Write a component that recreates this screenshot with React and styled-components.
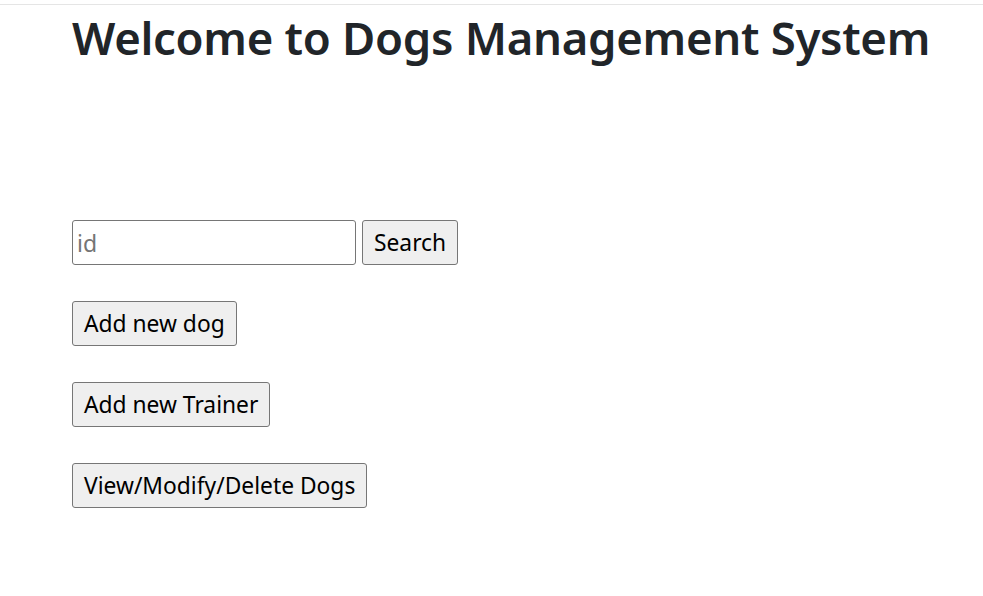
import React from "react";
import styled, { createGlobalStyle } from "styled-components";

const GlobalStyle = createGlobalStyle`
  html, body {
    margin: 0;
    padding: 0;
    background: #ffffff;
  }
  body {
    font-family: "Noto Sans", "Open Sans", sans-serif;
    color: #212529;
  }
`;

const actions = ["Add new dog", "Add new Trainer", "View/Modify/Delete Dogs"];

const App = () => {
  return (
    <>
      <GlobalStyle />
      <TopRule />
      <Page>
        <Title>Welcome to Dogs Management System</Title>
        <SearchRow>
          <IdInput placeholder="id" />
          <Button>Search</Button>
        </SearchRow>
        {actions.map((label) => (
          <ActionRow key={label}>
            <Button>{label}</Button>
          </ActionRow>
        ))}
      </Page>
    </>
  );
};

export default App;

const TopRule = styled.div`
  margin-top: 4px;
  border-top: 1px solid #e5e5e5;
`;

const Page = styled.div`
  padding-left: 72px;
  display: flex;
  flex-direction: column;
  align-items: flex-start;
`;

const Title = styled.h1`
  margin: 0;
  font-size: 45.5px;
  font-weight: 600;
  line-height: 64px;
  color: #212529;
  letter-spacing: -0.3px;
`;

const SearchRow = styled.div`
  display: flex;
  gap: 6px;
  margin-top: 151px;
`;

const ActionRow = styled.div`
  margin-top: 36px;
`;

const IdInput = styled.input`
  box-sizing: border-box;
  width: 284px;
  height: 45px;
  padding: 0 4px;
  border: 1px solid #767676;
  border-radius: 3px;
  font-family: "Noto Sans", sans-serif;
  font-size: 23px;
  color: #000;
  outline: none;
  &::placeholder {
    color: #757575;
  }
`;

const Button = styled.button`
  box-sizing: border-box;
  height: 45px;
  padding: 0 11px;
  background: #efefef;
  border: 1px solid #767676;
  border-radius: 3px;
  font-family: "Noto Sans", sans-serif;
  font-size: 22.8px;
  color: #000;
  cursor: pointer;
`;
